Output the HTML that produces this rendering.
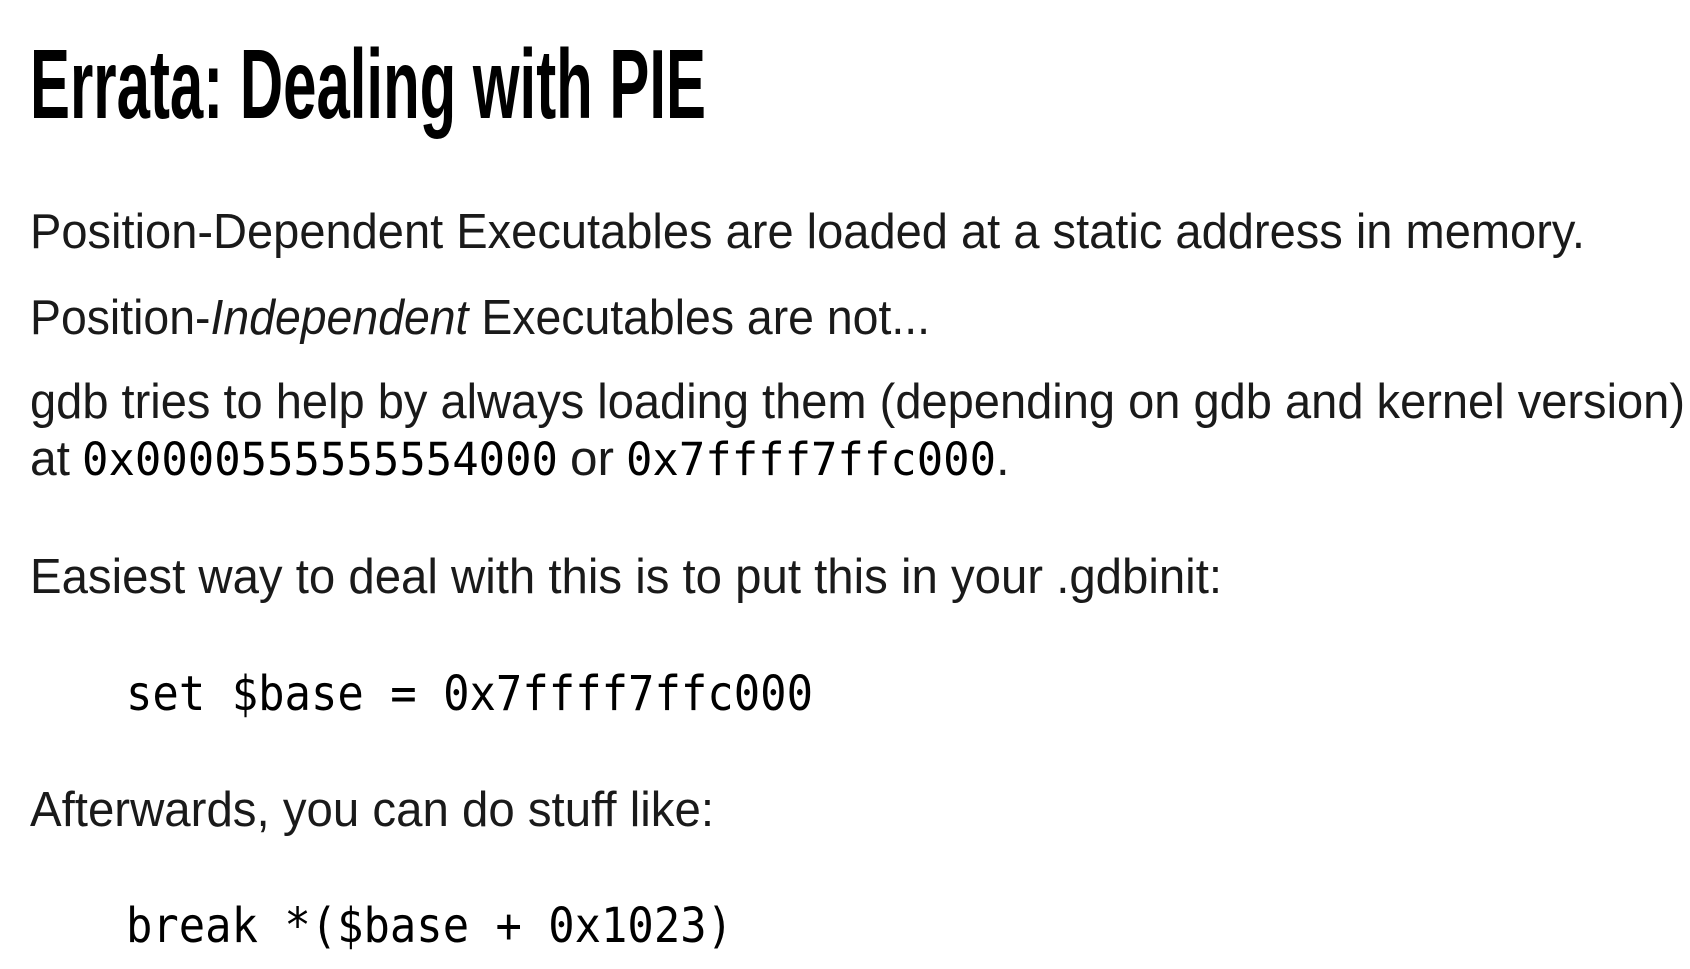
<!DOCTYPE html>
<html><head><meta charset="utf-8"><style>
html,body{margin:0;padding:0;background:#fff;width:1690px;height:969px;overflow:hidden}
svg{display:block}
.b{font-family:"Liberation Sans",sans-serif;font-size:49px;fill:#1a1a1a}
.m{font-family:"DejaVu Sans Mono","Liberation Mono",monospace;fill:#000}
</style></head><body>
<svg width="1690" height="969" xmlns="http://www.w3.org/2000/svg">
<text x="30" y="118" font-family="Liberation Sans,sans-serif" font-weight="bold" font-size="98" textLength="676" lengthAdjust="spacingAndGlyphs" fill="#000">Errata: Dealing with PIE</text>
<text class="b" x="30" y="248" textLength="1555" lengthAdjust="spacingAndGlyphs">Position-Dependent Executables are loaded at a static address in memory.</text>
<text class="b" x="30" y="334" textLength="900" lengthAdjust="spacingAndGlyphs">Position-<tspan font-style="italic">Independent</tspan> Executables are not...</text>
<text class="b" x="30" y="418" textLength="1655" lengthAdjust="spacingAndGlyphs">gdb tries to help by always loading them (depending on gdb and kernel version)</text>
<text class="b" x="30" y="475" textLength="40" lengthAdjust="spacingAndGlyphs">at</text>
<text class="m" x="82" y="475" font-size="45" textLength="476" lengthAdjust="spacingAndGlyphs">0x0000555555554000</text>
<text class="b" x="570" y="475" textLength="44" lengthAdjust="spacingAndGlyphs">or</text>
<text class="m" x="626" y="475" font-size="45" textLength="370" lengthAdjust="spacingAndGlyphs">0x7ffff7ffc000</text>
<text class="b" x="996" y="475">.</text>
<text class="b" x="30" y="593" textLength="1192" lengthAdjust="spacingAndGlyphs">Easiest way to deal with this is to put this in your .gdbinit:</text>
<text class="m" x="126" y="710" font-size="48" textLength="687" lengthAdjust="spacingAndGlyphs">set $base = 0x7ffff7ffc000</text>
<text class="b" x="30" y="826" textLength="684" lengthAdjust="spacingAndGlyphs">Afterwards, you can do stuff like:</text>
<text class="m" x="126" y="942" font-size="48" textLength="607" lengthAdjust="spacingAndGlyphs">break *($base + 0x1023)</text>
</svg>
</body></html>
